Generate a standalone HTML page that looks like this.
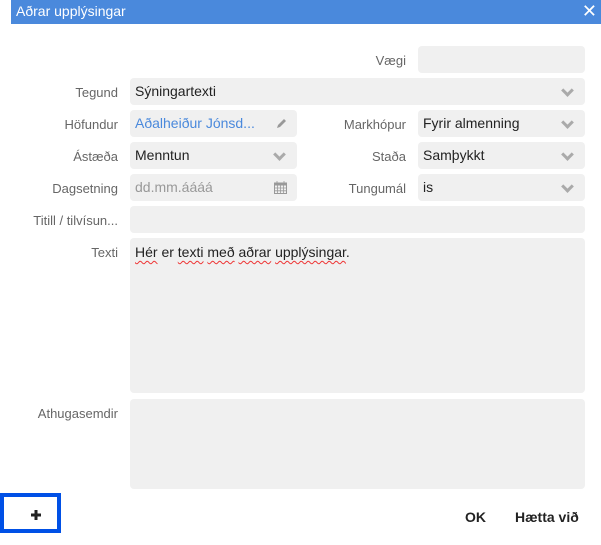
<!DOCTYPE html>
<html><head><meta charset="utf-8"><style>
body{margin:0;width:601px;height:545px;background:#fff;position:relative;overflow:hidden;font-family:"Liberation Sans",sans-serif}
.bar{position:absolute;left:11px;top:0;width:590px;height:24px;background:#4a89dc;color:#fff;font-size:14px;line-height:23px;padding-left:5px;box-sizing:border-box}
.x{position:absolute;right:4px;top:0;font-size:18px;line-height:22px}
.lbl{position:absolute;font-size:13px;color:#666;text-align:right;white-space:nowrap}
.box{position:absolute;background:#f0f0f0;border-radius:4px;font-size:14px;color:#222;line-height:27px;padding-left:5px;box-sizing:border-box;white-space:nowrap;overflow:hidden}
.chev{position:absolute;right:13px;top:8px;width:6px;height:6px;border-right:3px solid #aaa;border-bottom:3px solid #aaa;transform:rotate(45deg)}
.btn{position:absolute;font-size:14px;color:#222;font-weight:bold}
.sq{text-decoration:underline wavy #e33;text-decoration-thickness:1px;text-underline-offset:3px}
</style></head><body>
<div class="bar">Aðrar upplýsingar<span class="x">✕</span></div>

<div class="lbl" style="right:195px;top:53px">Vægi</div>
<div class="box" style="left:418px;top:46px;width:167px;height:27px"></div>

<div class="lbl" style="right:483px;top:85px">Tegund</div>
<div class="box" style="left:130px;top:78px;width:455px;height:27px">Sýningartexti<span class="chev"></span></div>

<div class="lbl" style="right:483px;top:117px">Höfundur</div>
<div class="box" style="left:130px;top:110px;width:167px;height:27px;color:#4a89dc">Aðalheiður Jónsd...<svg style="position:absolute;right:10px;top:8px" width="12" height="12" viewBox="0 0 12 12"><path d="M2 10l1-3 6-6 2 2-6 6z" fill="#999"/></svg></div>
<div class="lbl" style="right:195px;top:117px">Markhópur</div>
<div class="box" style="left:418px;top:110px;width:167px;height:27px">Fyrir almenning<span class="chev"></span></div>

<div class="lbl" style="right:483px;top:149px">Ástæða</div>
<div class="box" style="left:130px;top:142px;width:167px;height:27px">Menntun<span class="chev"></span></div>
<div class="lbl" style="right:195px;top:149px">Staða</div>
<div class="box" style="left:418px;top:142px;width:167px;height:27px">Samþykkt<span class="chev"></span></div>

<div class="lbl" style="right:483px;top:181px">Dagsetning</div>
<div class="box" style="left:130px;top:174px;width:167px;height:27px;color:#999">dd.mm.áááá
<svg style="position:absolute;right:10px;top:7px" width="13" height="13" viewBox="0 0 13 13"><rect x="0.5" y="2" width="12" height="10.5" fill="none" stroke="#999"/><rect x="0.5" y="2" width="12" height="2.5" fill="#999"/><path d="M3 0v3M10 0v3M0.5 7h12M0.5 9.8h12M3.5 4.5v8M6.5 4.5v8M9.5 4.5v8" stroke="#999" stroke-width="0.8"/></svg></div>
<div class="lbl" style="right:195px;top:181px">Tungumál</div>
<div class="box" style="left:418px;top:174px;width:167px;height:27px">is<span class="chev"></span></div>

<div class="lbl" style="right:483px;top:213px">Titill / tilvísun...</div>
<div class="box" style="left:130px;top:206px;width:455px;height:27px"></div>

<div class="lbl" style="right:483px;top:245px">Texti</div>
<div class="box" style="left:130px;top:238px;width:455px;height:155px;line-height:28px"><span class="sq">Hér</span> er <span class="sq">texti</span> <span class="sq">með</span> <span class="sq">aðrar</span> <span class="sq">upplýsingar</span>.</div>

<div class="lbl" style="right:483px;top:406px">Athugasemdir</div>
<div class="box" style="left:130px;top:399px;width:455px;height:90px"></div>

<div style="position:absolute;left:0;top:493px;width:61px;height:40px;border:4px solid #0050e6;box-sizing:border-box"><svg style="position:absolute;left:26px;top:12px" width="12" height="12" viewBox="0 0 12 12"><path d="M6 1v10M1 6h10" stroke="#222" stroke-width="3"/></svg></div>
<div class="btn" style="left:465px;top:509px">OK</div>
<div class="btn" style="left:515px;top:509px">Hætta við</div>
</body></html>
